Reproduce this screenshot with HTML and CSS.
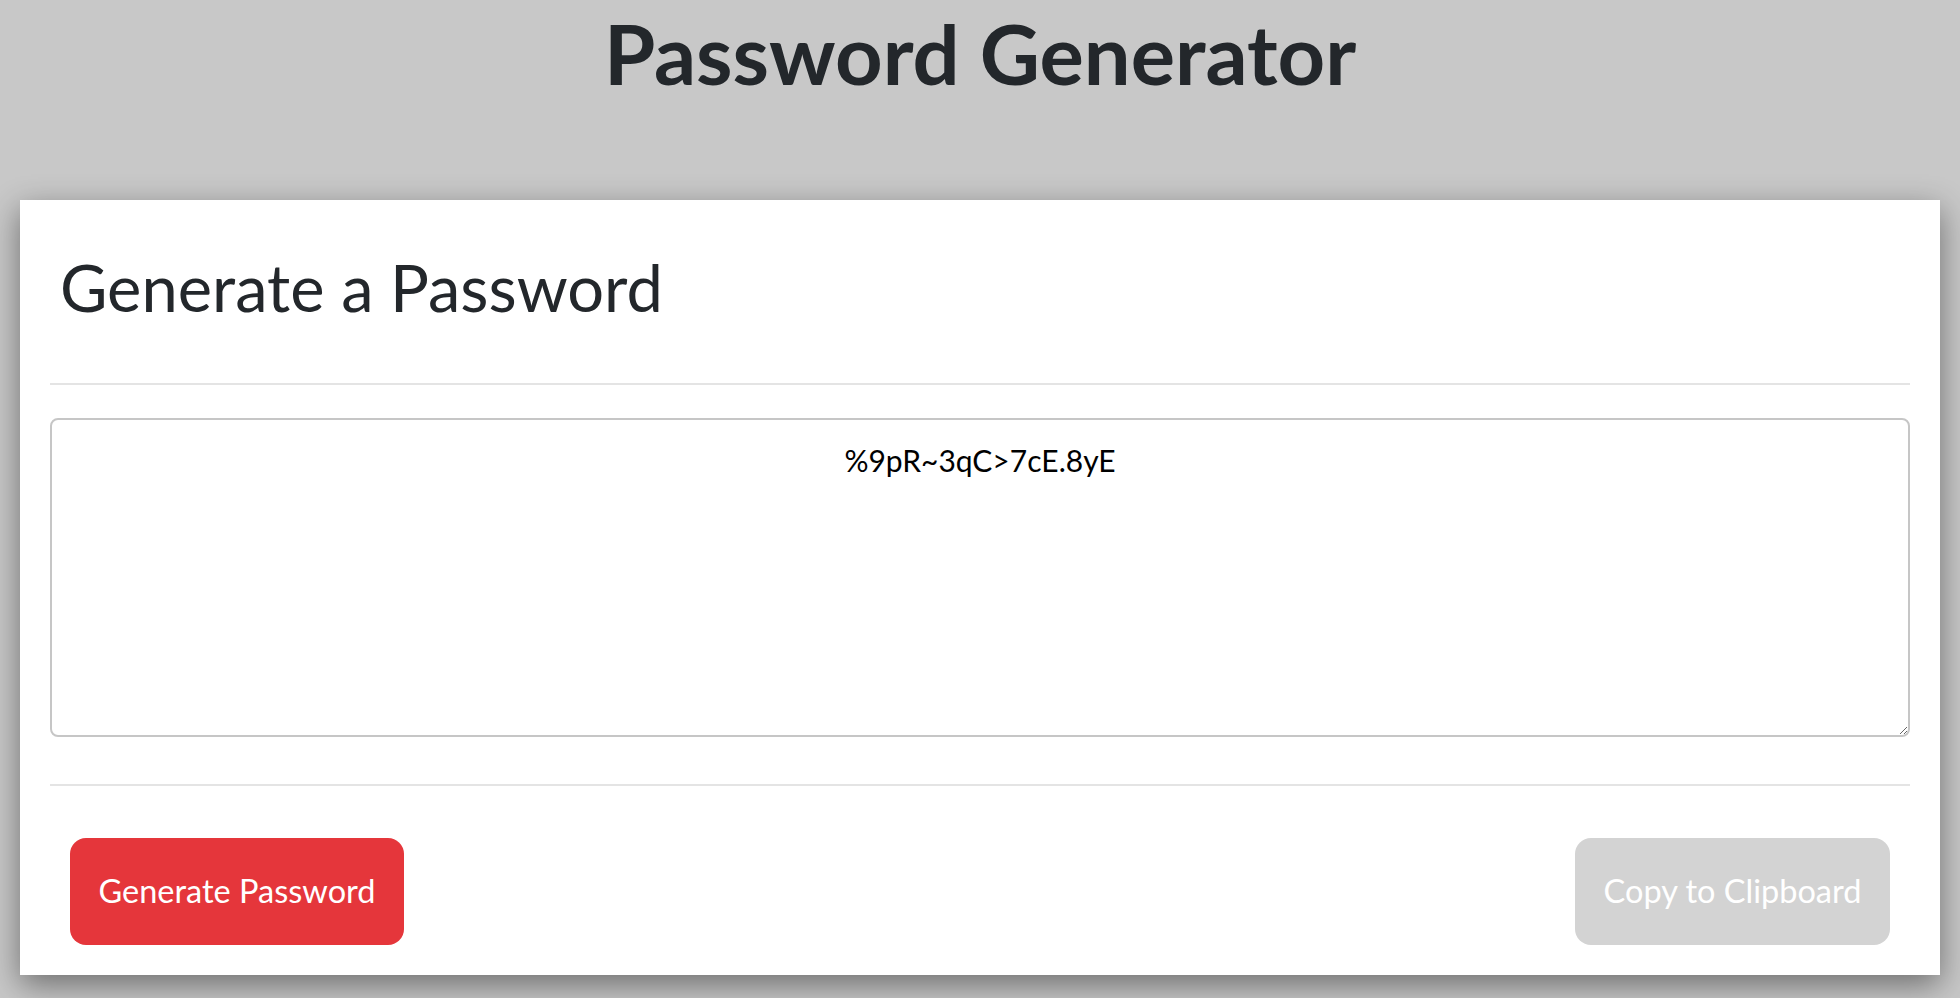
FILE: index.html
```html
<!DOCTYPE html>
<html lang="en">
<head>
<meta charset="utf-8">
<title>Password Generator</title>
<link rel="stylesheet" href="styles.css">
</head>
<body>
<div class="wrapper">
  <header class="page-header">
    <h1>Password Generator</h1>
  </header>
  <div class="card">
    <div class="card-header">
      <h2>Generate a Password</h2>
    </div>
    <div class="card-body">
      <textarea class="password" readonly>%9pR~3qC&gt;7cE.8yE</textarea>
    </div>
    <div class="card-footer">
      <button class="btn btn-generate">Generate Password</button>
      <button class="btn btn-copy" disabled>Copy to Clipboard</button>
    </div>
  </div>
</div>
</body>
</html>
```

FILE: styles.css
```css
*, *::before, *::after { box-sizing: border-box; }

html, body {
  margin: 0;
  padding: 0;
}

body {
  background: #c8c8c8;
  font-family: "Lato", "Open Sans", sans-serif;
  color: #212529;
  height: 998px;
  overflow: hidden;
}

.wrapper {
  padding: 0 20px;
}

.page-header {
  height: 200px;
  text-align: center;
}

.page-header h1 {
  margin: 0;
  padding-top: 12px;
  font-size: 83px;
  line-height: 1;
  font-weight: 700;
  color: #23272b;
}

.card {
  background: #ffffff;
  padding: 0 30px;
  box-shadow: 0 10px 30px rgba(0, 0, 0, 0.45);
}

.card-header {
  height: 185px;
  border-bottom: 2px solid #e4e4e4;
}

.card-header h2 {
  margin: 0;
  padding: 55px 0 0 10px;
  font-size: 65px;
  line-height: 1;
  font-weight: 400;
  color: #23272b;
}

.card-body {
  padding: 33px 0 47px;
  border-bottom: 2px solid #e4e4e4;
}

.password {
  display: block;
  width: 100%;
  height: 319px;
  margin: 0;
  padding: 22px 15px 15px;
  border: 2px solid #c6c6c6;
  border-radius: 8px;
  font-family: "Lato", "Open Sans", sans-serif;
  font-size: 30px;
  line-height: 1.2;
  text-align: center;
  color: #000000;
  background: #ffffff;
  outline: none;
}

.card-footer {
  display: flex;
  justify-content: space-between;
  align-items: flex-start;
  padding: 52px 20px 30px;
}

.btn {
  height: 107px;
  border: none;
  border-radius: 16px;
  padding: 0 24px 3px;
  font-family: "Lato", "Open Sans", sans-serif;
  font-size: 32.5px;
  color: #ffffff;
  cursor: pointer;
}

.btn-generate {
  width: 334px;
  background: #e5363b;
}

.btn-copy {
  width: 315px;
  background: #d3d3d3;
  cursor: default;
}
```
